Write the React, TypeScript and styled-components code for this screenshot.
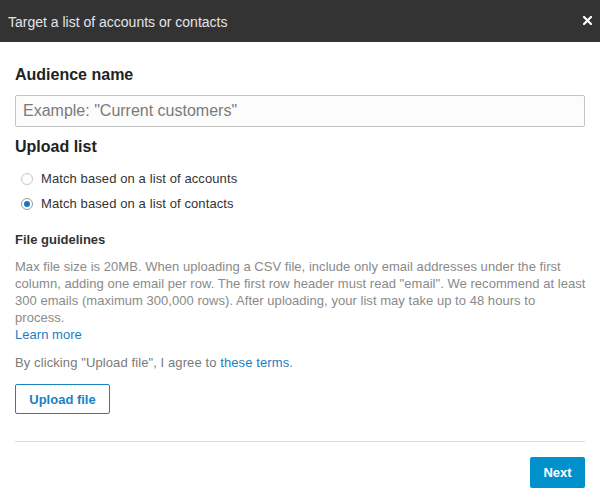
import React from "react";
import styled, { createGlobalStyle } from "styled-components";

const Global = createGlobalStyle`
  html, body { margin: 0; padding: 0; background: #fff; }
  body { font-family: Arial, "Liberation Sans", Helvetica, sans-serif; }
  * { box-sizing: border-box; }
`;

const Dialog = styled.div`
  width: 600px;
  height: 502px;
  display: flex;
  flex-direction: column;
  background: #fff;
`;

const Header = styled.div`
  height: 42px;
  background: #333333;
  display: flex;
  align-items: center;
  justify-content: space-between;
  padding: 0 8px 0 8px;
`;

const Title = styled.h1`
  margin: 0;
  font-size: 14px;
  font-weight: normal;
  color: #e2e4ea;
  padding-top: 2px;
`;

const Close = styled.button`
  border: 0;
  background: transparent;
  padding: 0;
  width: 10px;
  height: 10px;
  display: flex;
  align-items: center;
  justify-content: center;
  margin-top: -2px;
  cursor: pointer;
`;

const Body = styled.div`
  padding: 24px 15px 0 15px;
  display: flex;
  flex-direction: column;
`;

const Heading = styled.h2`
  margin: 0;
  font-size: 16px;
  font-weight: bold;
  color: #222;
  line-height: 18px;
`;

const Input = styled.input`
  margin-top: 11px;
  width: 100%;
  height: 32px;
  border: 1px solid #c4c4c4;
  border-radius: 2px;
  background: #fcfcfc;
  padding: 0 7px;
  font-family: Arial, "Liberation Sans", sans-serif;
  font-size: 16px;
  color: #333;
  &::placeholder { color: #7a7a7a; }
`;

const SectionHeading = styled(Heading)`
  margin-top: 11px;
`;

const RadioGroup = styled.div`
  margin-top: 14px;
  display: flex;
  flex-direction: column;
  gap: 7px;
  padding-left: 6px;
`;

const RadioRow = styled.label`
  display: flex;
  align-items: center;
  gap: 8px;
  font-size: 13px;
  letter-spacing: 0.1px;
  color: #333;
  line-height: 18px;
`;

const RadioDot = styled.span<{ $checked?: boolean }>`
  width: 12px;
  height: 12px;
  border-radius: 50%;
  border: 1px solid ${(p) => (p.$checked ? "#9a9a9a" : "#c8c8c8")};
  background: #fff;
  display: flex;
  align-items: center;
  justify-content: center;
  flex: none;
  &::after {
    content: "";
    width: 6px;
    height: 6px;
    border-radius: 50%;
    background: ${(p) => (p.$checked ? "#1a73c8" : "transparent")};
  }
`;

const SubHeading = styled.h3`
  margin: 19px 0 0 0;
  font-size: 13px;
  font-weight: bold;
  color: #333;
  line-height: 16px;
`;

const Para = styled.p`
  margin: 10px 0 0 0;
  font-size: 13px;
  letter-spacing: 0.04px;
  line-height: 17px;
  color: #8a8a8a;
  white-space: nowrap;
`;

const Link = styled.a`
  color: #1a7ec4;
  text-decoration: none;
`;

const Terms = styled.p`
  margin: 11px 0 0 0;
  font-size: 13px;
  letter-spacing: 0.1px;
  line-height: 17px;
  color: #7a7a7a;
`;

const OutlineButton = styled.button`
  margin-top: 13px;
  align-self: flex-start;
  width: 95px;
  height: 30px;
  border: 1px solid #1a82c4;
  border-radius: 2px;
  background: #fff;
  color: #1a82c4;
  font-family: Arial, "Liberation Sans", sans-serif;
  font-weight: bold;
  font-size: 13px;
`;

const Divider = styled.hr`
  margin: 27px 0 0 0;
  border: 0;
  border-top: 1px solid #dadada;
  height: 0;
`;

const Footer = styled.div`
  display: flex;
  justify-content: flex-end;
  padding-top: 15px;
`;

const PrimaryButton = styled.button`
  width: 55px;
  height: 31px;
  border: 0;
  border-radius: 2px;
  background: #0090cc;
  color: #fff;
  font-family: Arial, "Liberation Sans", sans-serif;
  font-weight: bold;
  font-size: 13px;
`;

export default function App() {
  return (
    <>
      <Global />
      <Dialog>
        <Header>
          <Title>Target a list of accounts or contacts</Title>
          <Close aria-label="Close">
            <svg width="9" height="9" viewBox="0 0 9 9">
              <path d="M1 1 L8 8 M8 1 L1 8" stroke="#fff" strokeWidth="2.2" strokeLinecap="square" />
            </svg>
          </Close>
        </Header>
        <Body>
          <Heading>Audience name</Heading>
          <Input placeholder={'Example: "Current customers"'} />
          <SectionHeading>Upload list</SectionHeading>
          <RadioGroup>
            <RadioRow>
              <RadioDot />
              Match based on a list of accounts
            </RadioRow>
            <RadioRow>
              <RadioDot $checked />
              Match based on a list of contacts
            </RadioRow>
          </RadioGroup>
          <SubHeading>File guidelines</SubHeading>
          <Para>
            Max file size is 20MB. When uploading a CSV file, include only email addresses under the first
            <br />
            column, adding one email per row. The first row header must read "email". We recommend at least
            <br />
            300 emails (maximum 300,000 rows). After uploading, your list may take up to 48 hours to
            <br />
            process.
            <br />
            <Link href="#">Learn more</Link>
          </Para>
          <Terms>
            By clicking "Upload file", I agree to <Link href="#">these terms</Link>.
          </Terms>
          <OutlineButton>Upload file</OutlineButton>
          <Divider />
          <Footer>
            <PrimaryButton>Next</PrimaryButton>
          </Footer>
        </Body>
      </Dialog>
    </>
  );
}
